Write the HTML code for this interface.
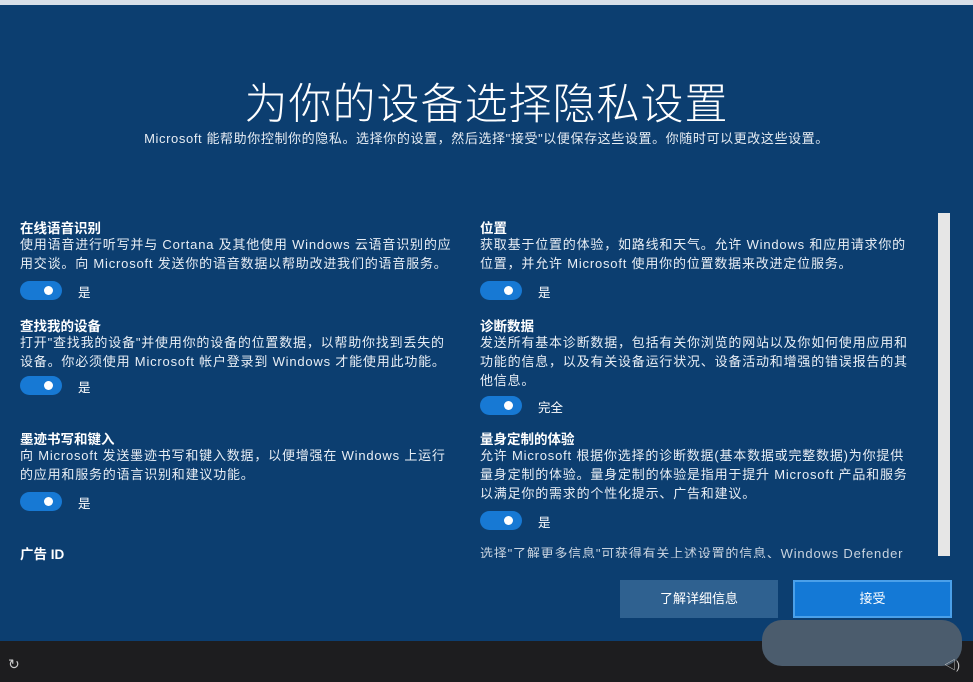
<!DOCTYPE html>
<html><head><meta charset="utf-8"><style>
*{margin:0;padding:0;box-sizing:border-box}
body{width:973px;height:682px;background:#0c3e70;font-family:"Liberation Sans","Noto Sans CJK SC",sans-serif;color:#fff;position:relative;overflow:hidden}
.a{position:absolute}
h1{position:absolute;top:70px;left:0;width:973px;text-align:center;font-weight:300;font-size:43px;letter-spacing:1px;font-family:"Noto Sans CJK SC",sans-serif}
.sub{top:128px;left:0;width:973px;text-align:center;font-size:13px;letter-spacing:0.6px;color:#e6ecf3}
.t{font-size:13.5px;font-weight:bold}
.p{font-size:13px;line-height:19px;color:#e8eef5;letter-spacing:0.8px;white-space:nowrap}
.tg{width:42px;height:19px;border-radius:10px;background:#1779d4}
.tg:after{content:"";position:absolute;right:9px;top:5px;width:9px;height:9px;border-radius:50%;background:#fff}
.l{font-size:12.5px}
</style></head><body>
<div class="a" style="top:0;left:0;width:973px;height:5px;background:#d8dfe8"></div>
<h1>为你的设备选择隐私设置</h1>
<div class="a sub">Microsoft 能帮助你控制你的隐私。选择你的设置，然后选择"接受"以便保存这些设置。你随时可以更改这些设置。</div>

<div class="a t" style="left:20px;top:217px">在线语音识别</div>
<div class="a p" style="left:20px;top:235px;width:450px">使用语音进行听写并与 Cortana 及其他使用 Windows 云语音识别的应<br>用交谈。向 Microsoft 发送你的语音数据以帮助改进我们的语音服务。</div>
<div class="a tg" style="left:20px;top:281px"></div><div class="a l" style="left:78px;top:282px">是</div>

<div class="a t" style="left:20px;top:315px">查找我的设备</div>
<div class="a p" style="left:20px;top:333px;width:450px">打开"查找我的设备"并使用你的设备的位置数据，以帮助你找到丢失的<br>设备。你必须使用 Microsoft 帐户登录到 Windows 才能使用此功能。</div>
<div class="a tg" style="left:20px;top:376px"></div><div class="a l" style="left:78px;top:377px">是</div>

<div class="a t" style="left:20px;top:428px">墨迹书写和键入</div>
<div class="a p" style="left:20px;top:446px;width:450px">向 Microsoft 发送墨迹书写和键入数据，以便增强在 Windows 上运行<br>的应用和服务的语言识别和建议功能。</div>
<div class="a tg" style="left:20px;top:492px"></div><div class="a l" style="left:78px;top:493px">是</div>

<div class="a t" style="left:20px;top:543px">广告 ID</div>

<div class="a t" style="left:480px;top:217px">位置</div>
<div class="a p" style="left:480px;top:235px;width:455px">获取基于位置的体验，如路线和天气。允许 Windows 和应用请求你的<br>位置，并允许 Microsoft 使用你的位置数据来改进定位服务。</div>
<div class="a tg" style="left:480px;top:281px"></div><div class="a l" style="left:538px;top:282px">是</div>

<div class="a t" style="left:480px;top:315px">诊断数据</div>
<div class="a p" style="left:480px;top:333px;width:455px">发送所有基本诊断数据，包括有关你浏览的网站以及你如何使用应用和<br>功能的信息，以及有关设备运行状况、设备活动和增强的错误报告的其<br>他信息。</div>
<div class="a tg" style="left:480px;top:396px"></div><div class="a l" style="left:538px;top:397px">完全</div>

<div class="a t" style="left:480px;top:428px">量身定制的体验</div>
<div class="a p" style="left:480px;top:446px;width:455px">允许 Microsoft 根据你选择的诊断数据(基本数据或完整数据)为你提供<br>量身定制的体验。量身定制的体验是指用于提升 Microsoft 产品和服务<br>以满足你的需求的个性化提示、广告和建议。</div>
<div class="a tg" style="left:480px;top:511px"></div><div class="a l" style="left:538px;top:512px">是</div>
<div class="a p" style="left:480px;top:544px;width:435px;height:14px;overflow:hidden;line-height:19px;color:#c8d3df">选择"了解更多信息"可获得有关上述设置的信息、Windows Defender</div>

<div class="a" style="left:938px;top:213px;width:12px;height:343px;background:#e6e6e6"></div>

<div class="a" style="left:620px;top:580px;width:158px;height:38px;background:#2f6190;font-size:13px;text-align:center;line-height:38px">了解详细信息</div>
<div class="a" style="left:793px;top:580px;width:159px;height:38px;background:#1479d6;border:2px solid #4aa0ea;font-size:13px;text-align:center;line-height:34px">接受</div>

<div class="a" style="left:0;top:641px;width:973px;height:41px;background:#1d1d1f"></div>
<div class="a" style="left:762px;top:620px;width:200px;height:46px;background:#4b5c6d;border-radius:20px"></div>
<div class="a" style="left:8px;top:656px;font-size:14px;color:#ccc">↻</div>
<div class="a" style="left:944px;top:656px;font-size:12px;color:#ccc">◁)</div>
</body></html>
